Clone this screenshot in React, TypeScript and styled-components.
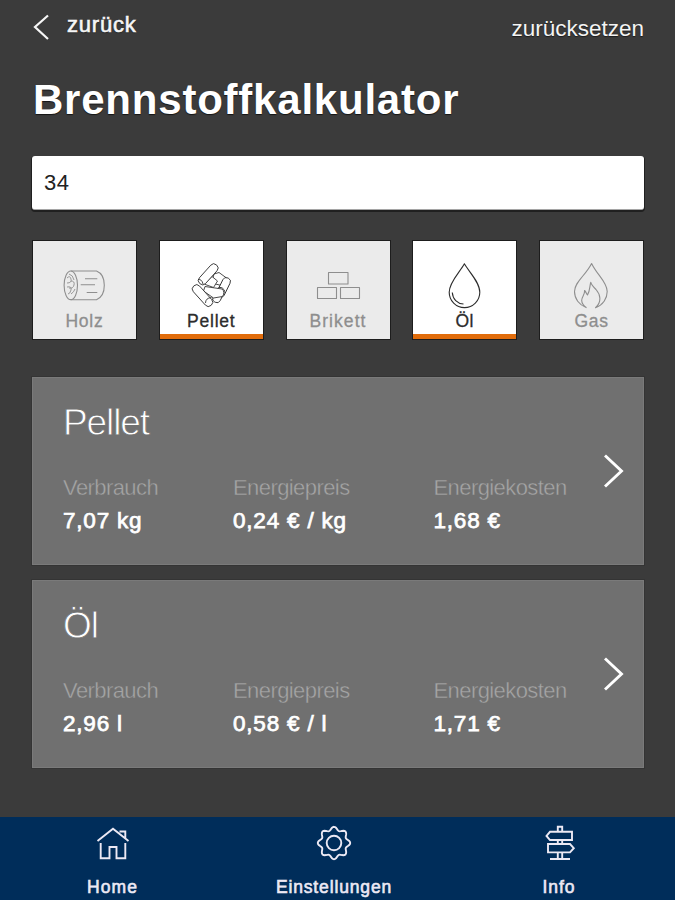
import React, { useState } from 'react';
import styled, { createGlobalStyle } from 'styled-components';

const GlobalStyle = createGlobalStyle`
  *, *::before, *::after { box-sizing: border-box; }
  body {
    margin: 0;
    background: #3b3b3b;
    font-family: "Liberation Sans", Arial, sans-serif;
  }
  button { font-family: inherit; border: 0; padding: 0; background: none; cursor: pointer; }
`;

const Screen = styled.div`
  display: flex;
  flex-direction: column;
  width: 675px;
  height: 900px;
  overflow: hidden;
  background: #3b3b3b;
  color: #fff;
`;

const Content = styled.main`
  flex: 1;
  padding: 0 31px 0 32px;
`;

const TopBar = styled.header`
  display: flex;
  justify-content: space-between;
  height: 72px;
  line-height: 26px;
`;

const BackButton = styled.button`
  display: flex;
  align-items: flex-start;
  gap: 17px;
  height: 45px;
  padding: 12px 0 0 1px;
  color: #f6f6f6;
  font-size: 22px;
  line-height: 26px;
  letter-spacing: 0.8px;
  -webkit-text-stroke: 0.6px #f6f6f6;
  text-shadow: 0 1px 1px #1c1c1c;

  svg { margin-top: 1px; }
`;

const ResetButton = styled.button`
  height: 42px;
  padding: 15px 0 0;
  color: #f4f4f4;
  font-size: 22.5px;
  line-height: 26px;
  text-shadow: 0 1px 1px #1c1c1c;
`;

const Title = styled.h1`
  margin: 0 0 0 1px;
  height: 84px;
  padding-top: 3px;
  font-size: 42px;
  line-height: 50px;
  font-weight: 700;
  letter-spacing: 0.78px;
  text-shadow: 0 1px 1px #151515;
`;

const ValueInput = styled.input`
  display: block;
  width: 612px;
  height: 54px;
  padding: 0 12px;
  border: 0;
  border-bottom: 1px solid #a5a5a5;
  border-radius: 3px;
  outline: 0;
  background: #fff;
  color: #222;
  font: 22px "Liberation Sans", Arial, sans-serif;
  letter-spacing: 0.5px;
  box-shadow: 0 1px 0 1px #202020;
`;

const FuelRow = styled.div`
  display: flex;
  justify-content: space-between;
  margin: 31px 1px 38px 1px;
`;

const FuelTile = styled.button<{ $active: boolean }>`
  display: flex;
  flex-direction: column;
  align-items: center;
  width: 103px;
  height: 98px;
  background: ${({ $active }) => ($active ? '#fff' : '#ebebeb')};
  color: ${({ $active }) => ($active ? '#2c2c2c' : '#8e8e8e')};
  border-bottom: ${({ $active }) => ($active ? '5px solid #e16c0b' : '0 solid')};
  box-shadow: 0 0 0 1px #1d1d1d;
`;

const FuelLabel = styled.span<{ $spacing: number }>`
  font-size: 17.5px;
  line-height: 20px;
  letter-spacing: ${({ $spacing }) => $spacing}px;
  -webkit-text-stroke: 0.3px currentColor;
`;

const CardList = styled.div`
  display: flex;
  flex-direction: column;
  gap: 15px;
`;

const Card = styled.section`
  display: flex;
  width: 612px;
  height: 188px;
  padding: 22px 20px 0 31px;
  background: #707070;
  box-shadow: inset 0 0 0 1px #7a7a7a, 0 0 0 1px #343434;
`;

const CardBody = styled.div`
  flex: 1;
`;

const CardTitle = styled.h2`
  margin: 1px 0 32px;
  font-size: 37px;
  line-height: 46px;
  font-weight: 400;
  letter-spacing: -1.1px;
  -webkit-text-stroke: 0.8px #707070;
`;

const Facts = styled.dl`
  display: grid;
  grid-template-columns: 170px 200.500px 160px;
  margin: 0;
`;

const FactName = styled.dt`
  color: #a6a6a6;
  font-size: 22px;
  line-height: 20px;
  letter-spacing: -0.58px;
  -webkit-text-stroke: 0.4px #707070;
`;

const FactValue = styled.dd`
  margin: 12px 0 0;
  font-size: 22.5px;
  line-height: 22px;
  letter-spacing: 0.8px;
  -webkit-text-stroke: 0.75px #fff;
  white-space: nowrap;
`;

const OpenButton = styled.button`
  width: 22px;
  height: 36px;
  margin-top: 54px;
`;

const NavBar = styled.nav`
  display: grid;
  grid-template-columns: 225px 218px 232px;
  height: 83px;
  background: #002d5a;
`;

const NavItem = styled.a`
  display: flex;
  flex-direction: column;
  align-items: center;
  padding-top: 6px;
  color: #ece9f4;
`;

const NavLabel = styled.span<{ $spacing: number }>`
  margin-top: 14px;
  font-size: 17.5px;
  line-height: 20px;
  letter-spacing: ${({ $spacing }) => $spacing}px;
  -webkit-text-stroke: 0.6px currentColor;
`;

const FuelIcon = ({ children }: { children: React.ReactNode }) => (
  <svg width="103" height="70" viewBox="0 0 103 70" fill="none" stroke="currentColor" strokeWidth="1.1" strokeLinejoin="round">
    {children}
  </svg>
);

const NavIcon = ({ children }: { children: React.ReactNode }) => (
  <svg width="40" height="40" viewBox="0 0 40 40" fill="none" stroke="currentColor" strokeWidth="1.9">
    {children}
  </svg>
);

const fuels = [
  {
    name: 'Holz',
    spacing: 0.8,
    icon: (
      <FuelIcon>
        <path d="M37.8 30H63.5Q71.3 33 71.3 44.3Q71.3 55.5 63.5 58.7H37.8" />
        <ellipse cx="37.8" cy="44.3" rx="6.7" ry="14.3" />
        <path d="M36 33q4 1 5 6M34 37q3-3 4 1t-4 4M38 40q4 0 3 4t-5 3M34 46q5-1 4 3t-3 4M38 53q3-2 4-5" strokeWidth=".9" />
        <path d="M52 37.7h12.3M47.7 43.7H62M53.7 51.5h10.6" />
      </FuelIcon>
    ),
  },
  {
    name: 'Pellet',
    spacing: 0.8,
    icon: (
      <FuelIcon>
        <g fill="#fff" strokeWidth="0.85">
          <path d="M54 33l5-1.500 7.500 5.500-3 8-12-3z" />
          <rect x="-4" y="-10.5" width="8" height="21" rx="3.8" transform="translate(63.5 46.5) rotate(26)" />
          <rect x="-4" y="-8" width="8" height="16" rx="3.8" transform="translate(58.500 54) rotate(26)" />
          <path d="M45 45.500l17 2.500q3.500 3 .500 7.500l-9 1.500-10-7z" />
          <path d="M44 43l8-7.500 5.500 4.500-4 6.500z" />
          <rect x="-4.200" y="-12.5" width="8.400" height="25" rx="4" transform="translate(48.2 33.300) rotate(42)" />
          <rect x="-4.200" y="-13" width="8.400" height="26" rx="4" transform="translate(42.5 54.6) rotate(-42)" />
          <path d="M38 38.500q4-.500 5 4.500M45.500 62q0-5 6-5.500" fill="none" />
        </g>
      </FuelIcon>
    ),
  },
  {
    name: 'Brikett',
    spacing: 1.05,
    icon: (
      <FuelIcon>
        <path d="M41.5 31.5h19.5v11.5h-19.5zM30.5 46.5h19v11h-19zM53.5 46.5h19v11h-19z" />
      </FuelIcon>
    ),
  },
  {
    name: 'Öl',
    spacing: 0.6,
    icon: (
      <FuelIcon>
        <path d="M51.4 22.8C47 31 36.2 41 36.2 51.2a15.3 15.4 0 0 0 30.6 0C66.8 41 56 31 51.4 22.8z" />
        <path d="M39.3 51.5c.4 6.600 4.900 11 11.200 11.500" />
      </FuelIcon>
    ),
  },
  {
    name: 'Gas',
    spacing: 0.7,
    icon: (
      <FuelIcon>
        <path d="M46.500 66.700C39 64 34.500 57.500 34.500 50.500C34.500 41 46 34 51.600 22.500C57 34 67.200 41 67.200 50.500C67.200 57.500 63 64 55.500 66.700C62 61 60.500 53.500 56 48.500C53 45.500 51.500 44 50.800 41.300C49.500 45 50.200 49.500 47.500 54C46.500 52.500 46 51 44.600 49.500C45 54 41.600 55.500 41.700 59.500C41.800 62.500 44 65 46.500 66.700" />
      </FuelIcon>
    ),
  },
];

const results = [
  { fuel: 'Pellet', facts: [['Verbrauch', '7,07 kg'], ['Energiepreis', '0,24 € / kg'], ['Energiekosten', '1,68 €']] },
  { fuel: 'Öl', facts: [['Verbrauch', '2,96 l'], ['Energiepreis', '0,58 € / l'], ['Energiekosten', '1,71 €']] },
];

const gearPath = (() => {
  const points: string[] = [];
  for (let i = 0; i <= 96; i++) {
    const angle = (i / 96) * Math.PI * 2;
    const radius = 14.5 + 1.7 * Math.cos(angle * 8);
    points.push(`${(20 + radius * Math.sin(angle)).toFixed(2)} ${(20 - radius * Math.cos(angle)).toFixed(2)}`);
  }
  return `M${points.join('L')}Z`;
})();

const navItems = [
  {
    name: 'Home',
    spacing: 1.1,
    icon: (
      <NavIcon>
        <path d="M4.500 18L20 5.800L35.500 18M7.700 20V35.200H16.500V24H23.500V35.200H32.300V20M26.500 8.500H32.300V15" />
      </NavIcon>
    ),
  },
  {
    name: 'Einstellungen',
    spacing: 0.85,
    icon: (
      <NavIcon>
        <path d={gearPath} />
        <circle cx="20" cy="20" r="7.300" />
      </NavIcon>
    ),
  },
  {
    name: 'Info',
    spacing: 1,
    icon: (
      <NavIcon>
        <path d="M18.800 8.500V3.800H23.200V8.500M11 8.800H33V17H11L7.500 12.900zM9 21H31L34.800 25.200L31 29.400H9zM18.800 17V21M23.200 17V21M18.800 29.400V36M23.200 29.400V36M11 36H31" />
      </NavIcon>
    ),
  },
];

export default function App() {
  const [value, setValue] = useState('34');
  const [selected, setSelected] = useState(['Pellet', 'Öl']);

  const toggle = (name: string) =>
    setSelected((current) => (current.includes(name) ? current.filter((n) => n !== name) : [...current, name]));

  return (
    <>
      <GlobalStyle />
      <Screen>
        <Content>
          <TopBar>
            <BackButton>
              <svg width="17" height="28" viewBox="0 0 17 28" fill="none" stroke="currentColor" strokeWidth="2.200">
                <path d="M15 2.500L2 14L15 26" />
              </svg>
              zurück
            </BackButton>
            <ResetButton onClick={() => setValue('')}>zurücksetzen</ResetButton>
          </TopBar>
          <Title>Brennstoffkalkulator</Title>
          <ValueInput value={value} onChange={(e) => setValue(e.target.value)} />
          <FuelRow>
            {fuels.map((fuel) => (
              <FuelTile key={fuel.name} $active={selected.includes(fuel.name)} onClick={() => toggle(fuel.name)}>
                {fuel.icon}
                <FuelLabel $spacing={fuel.spacing}>{fuel.name}</FuelLabel>
              </FuelTile>
            ))}
          </FuelRow>
          <CardList>
            {results.map((result) => (
              <Card key={result.fuel}>
                <CardBody>
                  <CardTitle>{result.fuel}</CardTitle>
                  <Facts>
                    {result.facts.map(([name, amount]) => (
                      <div key={name}>
                        <FactName>{name}</FactName>
                        <FactValue>{amount}</FactValue>
                      </div>
                    ))}
                  </Facts>
                </CardBody>
                <OpenButton aria-label={result.fuel}>
                  <svg width="22" height="36" viewBox="0 0 22 36" fill="none" stroke="#fff" strokeWidth="2.900">
                    <path d="M3 2.500L19.500 18L3 33.500" />
                  </svg>
                </OpenButton>
              </Card>
            ))}
          </CardList>
        </Content>
        <NavBar>
          {navItems.map((item) => (
            <NavItem key={item.name}>
              {item.icon}
              <NavLabel $spacing={item.spacing}>{item.name}</NavLabel>
            </NavItem>
          ))}
        </NavBar>
      </Screen>
    </>
  );
}
